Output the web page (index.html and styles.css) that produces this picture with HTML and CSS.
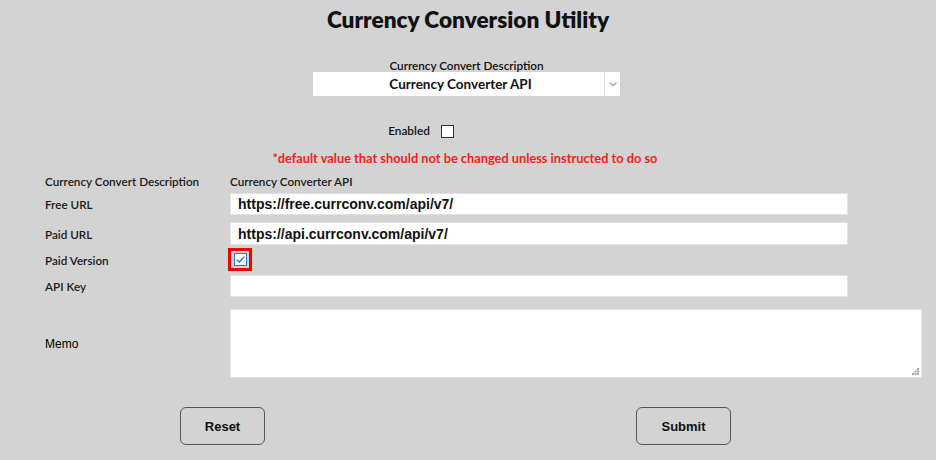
FILE: index.html
```html
<!DOCTYPE html>
<html lang="en">
<head>
<meta charset="utf-8">
<title>Currency Conversion Utility</title>
<link rel="stylesheet" href="styles.css">
</head>
<body>
<div class="page">
  <h1 class="title">Currency Conversion Utility</h1>

  <div class="select-group">
    <div class="select-label">Currency Convert Description</div>
    <div class="select">
      <span class="select-text">Currency Converter API</span>
      <span class="select-arrow">
        <svg width="8" height="5" viewBox="0 0 8 5"><path d="M0.5 0.8 L4 3.8 L7.5 0.8" fill="none" stroke="#9a9a9a" stroke-width="1.2"/></svg>
      </span>
    </div>
  </div>

  <div class="enabled-row">
    <span class="enabled-label">Enabled</span>
    <span class="check-empty"></span>
  </div>

  <div class="note">*default value that should not be changed unless instructed to do so</div>

  <div class="form">
    <div class="row row-desc">
      <div class="label">Currency Convert Description</div>
      <div class="value">Currency Converter API</div>
    </div>
    <div class="row row-free">
      <div class="label">Free URL</div>
      <div class="input">https://free.currconv.com/api/v7/</div>
    </div>
    <div class="row row-paid">
      <div class="label">Paid URL</div>
      <div class="input">https://api.currconv.com/api/v7/</div>
    </div>
    <div class="row row-version">
      <div class="label">Paid Version</div>
      <div class="check-frame">
        <span class="check-on">
          <svg width="11" height="11" viewBox="0 0 11 11"><path d="M1.8 5.6 L4.3 8 L9.4 2.6" fill="none" stroke="#1f6fd0" stroke-width="1.3"/></svg>
        </span>
      </div>
    </div>
    <div class="row row-key">
      <div class="label">API Key</div>
      <div class="input"></div>
    </div>
    <div class="row row-memo">
      <div class="label memo-label">Memo</div>
      <div class="textarea">
        <svg class="grip" width="7" height="7" viewBox="0 0 7 7">
          <rect x="5" y="0" width="2" height="2" fill="#a8a8a8"/>
          <rect x="2.5" y="2.5" width="2" height="2" fill="#a8a8a8"/>
          <rect x="5" y="2.5" width="2" height="2" fill="#a8a8a8"/>
          <rect x="0" y="5" width="2" height="2" fill="#a8a8a8"/>
          <rect x="2.5" y="5" width="2" height="2" fill="#a8a8a8"/>
          <rect x="5" y="5" width="2" height="2" fill="#a8a8a8"/>
        </svg>
      </div>
    </div>
  </div>

  <div class="buttons">
    <button class="btn btn-reset" type="button">Reset</button>
    <button class="btn btn-submit" type="button">Submit</button>
  </div>
</div>
</body>
</html>
```

FILE: styles.css
```css
html, body {
  margin: 0;
  padding: 0;
  background: #d3d3d3;
}

body {
  font-family: "Lato", "DejaVu Sans", sans-serif;
  color: #111;
}

.page {
  width: 936px;
  height: 460px;
  overflow: hidden;
}

.title {
  margin: 0;
  padding-top: 8px;
  height: 24px;
  line-height: 24px;
  font-size: 22.6px;
  font-weight: 800;
  text-align: center;
  color: #111;
}

.select-group {
  margin-top: 27px;
  display: flex;
  flex-direction: column;
  align-items: center;
  padding-right: 3px;
}

.select-label {
  height: 13px;
  line-height: 13px;
  font-size: 11.7px;
  font-weight: 600;
}

.select {
  width: 307px;
  height: 24px;
  background: #fff;
  display: flex;
}

.select-text {
  flex: 1;
  text-align: center;
  line-height: 24px;
  font-size: 13.5px;
  font-weight: 700;
  padding-left: 4px;
}

.select-arrow {
  width: 15px;
  border-left: 1px solid #dcdcdc;
  display: flex;
  align-items: center;
  justify-content: center;
}

.enabled-row {
  margin-top: 28px;
  height: 14px;
  display: flex;
  justify-content: center;
  align-items: center;
  gap: 11px;
  padding-right: 94px;
}

.enabled-label {
  font-size: 11.8px;
  font-weight: 600;
  line-height: 14px;
}

.check-empty {
  width: 11px;
  height: 11px;
  background: #fff;
  border: 1px solid #333;
}

.note {
  margin-top: 13px;
  height: 14px;
  line-height: 14px;
  text-align: center;
  font-size: 12.8px;
  font-weight: 700;
  color: #ff1a1a;
  padding-right: 6px;
}

.form {
  margin-top: 8px;
  padding-left: 45px;
}

.row {
  display: flex;
  align-items: center;
}

.label {
  width: 185px;
  flex: none;
  font-size: 11.7px;
  font-weight: 600;
  color: #1a1a1a;
}

.value {
  font-size: 11.7px;
  font-weight: 600;
  color: #1a1a1a;
}

.row-desc { height: 16px; }
.row-free { margin-top: 4px; height: 22px; }
.row-paid { margin-top: 7px; height: 23px; }
.row-version { margin-top: 3px; height: 23px; }
.row-key { margin-top: 4px; height: 22px; }
.row-memo { margin-top: 12px; height: 69px; }

.input {
  width: 618px;
  height: 100%;
  box-sizing: border-box;
  background: #fff;
  border: 1px solid #e2e2e2;
  padding-left: 7px;
  display: flex;
  align-items: center;
  font-family: "Liberation Sans", Arial, sans-serif;
  font-size: 14px;
  font-weight: 700;
  color: #111;
}

.check-frame {
  margin-left: -2px;
  width: 24px;
  height: 23px;
  box-sizing: border-box;
  border: 3px solid #f20000;
  display: flex;
  align-items: center;
  justify-content: center;
}

.check-on {
  width: 11px;
  height: 11px;
  background: #fff;
  border: 1px solid #2a78d2;
  display: flex;
}

.memo-label {
  font-family: "Liberation Sans", Arial, sans-serif;
  font-size: 12px;
  font-weight: 400;
  color: #000;
}

.textarea {
  width: 692px;
  height: 100%;
  box-sizing: border-box;
  background: #fff;
  border: 1px solid #e2e2e2;
  position: relative;
}

.grip {
  position: absolute;
  right: 2px;
  bottom: 2px;
}

.buttons {
  margin-top: 29px;
  display: flex;
  padding-left: 180px;
  gap: 371px;
}

.btn {
  height: 38px;
  box-sizing: border-box;
  border: 1px solid #555;
  border-radius: 6px;
  background: transparent;
  font-family: "Liberation Sans", Arial, sans-serif;
  font-size: 13px;
  font-weight: 700;
  color: #111;
  padding: 0;
}

.btn-reset { width: 85px; }
.btn-submit { width: 95px; }
```
